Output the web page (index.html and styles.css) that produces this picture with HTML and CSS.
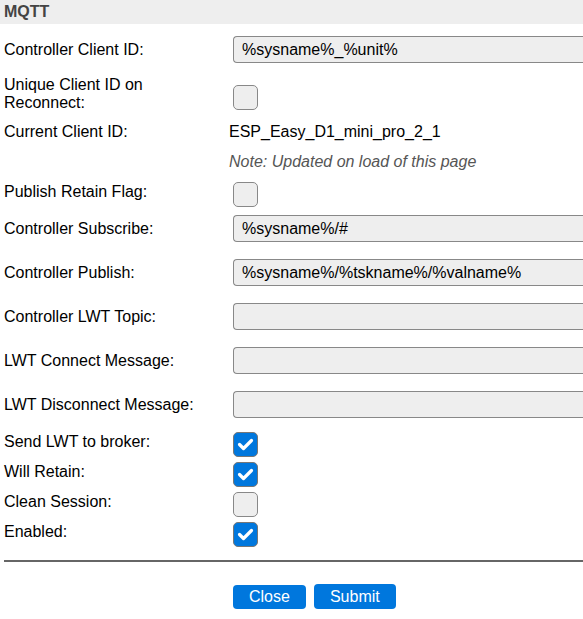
FILE: index.html
```html
<!DOCTYPE html>
<html>
<head>
<meta charset="utf-8">
<link rel="stylesheet" href="styles.css">
</head>
<body>
<div class="page">
  <div class="hdr">MQTT</div>
  <div class="form">
    <div class="row in"><div class="lbl">Controller Client ID:</div><div class="val"><div class="txt">%sysname%_%unit%</div></div></div>
    <div class="row two"><div class="lbl">Unique Client ID on<br>Reconnect:</div><div class="val"><div class="cbwrap"><span class="cb"></span></div></div></div>
    <div class="row"><div class="lbl">Current Client ID:</div><div class="val plain">ESP_Easy_D1_mini_pro_2_1</div></div>
    <div class="row"><div class="lbl"></div><div class="val plain note">Note: Updated on load of this page</div></div>
    <div class="row"><div class="lbl">Publish Retain Flag:</div><div class="val"><div class="cbwrap"><span class="cb"></span></div></div></div>
    <div class="row in"><div class="lbl">Controller Subscribe:</div><div class="val"><div class="txt">%sysname%/#</div></div></div>
    <div class="row in"><div class="lbl">Controller Publish:</div><div class="val"><div class="txt">%sysname%/%tskname%/%valname%</div></div></div>
    <div class="row in"><div class="lbl">Controller LWT Topic:</div><div class="val"><div class="txt"></div></div></div>
    <div class="row in"><div class="lbl">LWT Connect Message:</div><div class="val"><div class="txt"></div></div></div>
    <div class="row in"><div class="lbl">LWT Disconnect Message:</div><div class="val"><div class="txt"></div></div></div>
    <div class="row"><div class="lbl">Send LWT to broker:</div><div class="val"><div class="cbwrap"><span class="cb on"><svg viewBox="0 0 25 25" width="25" height="25"><polyline points="6.5,12.5 10.5,16.5 18.5,8.5" fill="none" stroke="#fff" stroke-width="3.2" stroke-linecap="round" stroke-linejoin="round"/></svg></span></div></div></div>
    <div class="row"><div class="lbl">Will Retain:</div><div class="val"><div class="cbwrap"><span class="cb on"><svg viewBox="0 0 25 25" width="25" height="25"><polyline points="6.5,12.5 10.5,16.5 18.5,8.5" fill="none" stroke="#fff" stroke-width="3.2" stroke-linecap="round" stroke-linejoin="round"/></svg></span></div></div></div>
    <div class="row"><div class="lbl">Clean Session:</div><div class="val"><div class="cbwrap"><span class="cb"></span></div></div></div>
    <div class="row"><div class="lbl">Enabled:</div><div class="val"><div class="cbwrap"><span class="cb on"><svg viewBox="0 0 25 25" width="25" height="25"><polyline points="6.5,12.5 10.5,16.5 18.5,8.5" fill="none" stroke="#fff" stroke-width="3.2" stroke-linecap="round" stroke-linejoin="round"/></svg></span></div></div></div>
  </div>
  <div class="sep"></div>
  <div class="btns">
    <span class="btn close">Close</span>
    <span class="btn submit">Submit</span>
  </div>
</div>
</body>
</html>
```
FILE: styles.css
```css
html, body {
  margin: 0;
  padding: 0;
  background: #fff;
}
body {
  font-family: "Liberation Sans", Arial, sans-serif;
  font-size: 16px;
  color: #000;
}
.page {
  width: 583px;
}
.hdr {
  height: 24px;
  line-height: 24px;
  background: #eeeeee;
  color: #444;
  font-weight: bold;
  padding-left: 4px;
  margin-bottom: 4px;
}
.row {
  display: grid;
  grid-template-columns: 229px 1fr;
  align-items: center;
  height: 30px;
}
.row.in { height: 44px; }
.row:first-child { height: 43px; }
.row.two { height: 45px; }
.lbl {
  padding-left: 4px;
  padding-top: 1px;
  line-height: 18px;
  white-space: nowrap;
}
.val {
  line-height: 18px;
}
.plain { color: #000; padding-top: 1px; }
.note {
  font-style: italic;
  color: #555;
}
.txt {
  margin-left: 4px;
  height: 27px;
  box-sizing: border-box;
  border: 1px solid #888;
  border-right: none;
  border-radius: 4px 0 0 4px;
  background: #eeeeee;
  padding: 0 8px;
  line-height: 25px;
  color: #000;
  white-space: nowrap;
}
.cbwrap {
  margin-left: 4px;
  height: 18px;
  display: flex;
  align-items: flex-start;
}
.cb {
  flex: none;
  display: block;
  width: 25px;
  height: 25px;
  box-sizing: border-box;
  border: 1px solid #888;
  border-radius: 5px;
  background: #eeeeee;
  overflow: hidden;
}
.cb.on {
  background: #0077dd;
  border-color: #777;
}
.cb svg {
  display: block;
  margin: -1px;
}
.sep {
  margin-top: 14px;
  margin-left: 4px;
  height: 2px;
  background: #666;
}
.btns {
  display: flex;
  align-items: flex-end;
  gap: 8px;
  padding-left: 233px;
  margin-top: 22px;
}
.btn {
  display: block;
  background: #0077dd;
  color: #fff;
  border-radius: 4px;
  line-height: 18px;
  padding: 3px 16px 3px 16px;
}
.btn.submit {
  padding: 4px 16px 3px 16px;
}
```
